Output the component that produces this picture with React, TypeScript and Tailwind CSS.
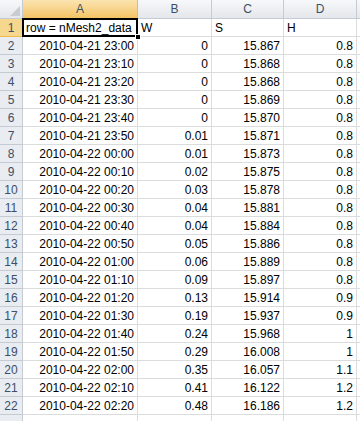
import React from 'react'

const rows: [string, string, string, string][] = [
  ['2010-04-21 23:00', '0', '15.867', '0.8'],
  ['2010-04-21 23:10', '0', '15.868', '0.8'],
  ['2010-04-21 23:20', '0', '15.868', '0.8'],
  ['2010-04-21 23:30', '0', '15.869', '0.8'],
  ['2010-04-21 23:40', '0', '15.870', '0.8'],
  ['2010-04-21 23:50', '0.01', '15.871', '0.8'],
  ['2010-04-22 00:00', '0.01', '15.873', '0.8'],
  ['2010-04-22 00:10', '0.02', '15.875', '0.8'],
  ['2010-04-22 00:20', '0.03', '15.878', '0.8'],
  ['2010-04-22 00:30', '0.04', '15.881', '0.8'],
  ['2010-04-22 00:40', '0.04', '15.884', '0.8'],
  ['2010-04-22 00:50', '0.05', '15.886', '0.8'],
  ['2010-04-22 01:00', '0.06', '15.889', '0.8'],
  ['2010-04-22 01:10', '0.09', '15.897', '0.8'],
  ['2010-04-22 01:20', '0.13', '15.914', '0.9'],
  ['2010-04-22 01:30', '0.19', '15.937', '0.9'],
  ['2010-04-22 01:40', '0.24', '15.968', '1'],
  ['2010-04-22 01:50', '0.29', '16.008', '1'],
  ['2010-04-22 02:00', '0.35', '16.057', '1.1'],
  ['2010-04-22 02:10', '0.41', '16.122', '1.2'],
  ['2010-04-22 02:20', '0.48', '16.186', '1.2'],
]

const cell = 'h-[18px] border-r border-b border-[#dadcdd] bg-white flex items-center px-[3px] pt-px overflow-hidden whitespace-nowrap'
const rowHead = 'h-[18px] border-r border-b border-[#c5cbd3] bg-[#e9ecf0] flex items-center justify-center pt-px text-[#3b4f68]'
const colHead = 'h-[19px] border-r border-b border-[#c5cbd3] bg-gradient-to-b from-[#f7f8fa] to-[#e4e7eb] flex items-center justify-center text-[#3b4f68]'

export default function App() {
  return (
    <div className="w-[360px] h-[421px] overflow-hidden bg-white text-[12px] text-black" style={{ fontFamily: '"Liberation Sans", Arial, sans-serif' }}>
      <div className="grid grid-cols-[23px_115px_74px_72px_73px_1fr]">
        {/* header row */}
        <div className="h-[19px] border-r border-b border-[#c5cbd3] bg-gradient-to-b from-[#f7f8fa] to-[#e4e7eb] flex items-end justify-end p-[2px]">
          <svg width="10" height="10" viewBox="0 0 10 10">
            <polygon points="10,0 10,10 0,10" fill="#c8ccd2" />
          </svg>
        </div>
        <div className="h-[19px] border-r border-b border-[#f2b84b] bg-gradient-to-b from-[#fbe4b0] to-[#f3c463] flex items-center justify-center text-[#3b4f68]">A</div>
        <div className={colHead}>B</div>
        <div className={colHead}>C</div>
        <div className={colHead}>D</div>
        <div className={colHead}></div>

        {/* row 1 */}
        <div className="h-[18px] border-r border-b border-[#f2b84b] bg-[#f5d78e] flex items-center justify-center pt-px text-[#3b4f68]">1</div>
        <div className={cell + ' relative overflow-visible'}>
          <span>row = nMesh2_data</span>
          <div className="absolute -left-px -top-px right-[-1px] bottom-[-1px] border-2 border-black" />
          <div className="absolute right-[-4px] bottom-[-4px] w-[6px] h-[6px] bg-black border border-white" />
        </div>
        <div className={cell}>W</div>
        <div className={cell}>S</div>
        <div className={cell}>H</div>
        <div className={cell}></div>

        {rows.map((r, i) => (
          <React.Fragment key={i}>
            <div className={rowHead}>{i + 2}</div>
            <div className={cell + ' justify-end'}>{r[0]}</div>
            <div className={cell + ' justify-end'}>{r[1]}</div>
            <div className={cell + ' justify-end'}>{r[2]}</div>
            <div className={cell + ' justify-end'}>{r[3]}</div>
            <div className={cell}></div>
          </React.Fragment>
        ))}

        {/* row 23, cut off by the window */}
        <div className={rowHead}></div>
        <div className={cell}></div>
        <div className={cell}></div>
        <div className={cell}></div>
        <div className={cell}></div>
        <div className={cell}></div>
      </div>
    </div>
  )
}
